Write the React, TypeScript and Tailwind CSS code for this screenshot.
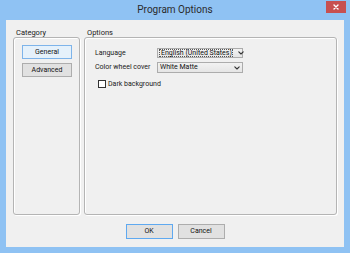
import React from "react";

const font = { fontFamily: 'Roboto, "Liberation Sans", Arial, sans-serif' };

function Chevron() {
  return (
    <svg width="6" height="4" viewBox="0 0 6 4" fill="none" stroke="#333" strokeWidth="1.1" strokeLinecap="round" strokeLinejoin="round">
      <path d="M0.8 0.8 L3 3 L5.2 0.8" />
    </svg>
  );
}

function Combo({ value, focused }: { value: string; focused?: boolean }) {
  return (
    <div className="w-[86px] h-full flex items-center border border-[#acacac] bg-gradient-to-b from-[#f2f2f2] to-[#e5e5e5] pl-[1px]">
      <div className={`flex-1 h-full flex items-center pl-[1px] text-[7px] leading-none text-[#111] whitespace-nowrap ${focused ? "border border-[#555] border-dotted mr-[3px]" : ""}`}>
        {value}
      </div>
      <div className="w-[10px] flex items-center justify-center shrink-0">
        <Chevron />
      </div>
    </div>
  );
}

function GroupBox({ label, className, children }: { label: string; className: string; children?: React.ReactNode }) {
  return (
    <div className={`flex flex-col ${className}`}>
      <div className="h-[9px] pl-[3px] text-[7.5px] leading-[9px] text-[#1a1a1a]">{label}</div>
      <div className="h-[178px] border border-[#b4b4b4] rounded-[3px] shadow-[1px_1px_0_#fff,inset_1px_1px_0_#fff]">
        {children}
      </div>
    </div>
  );
}

export default function App() {
  return (
    <div className="w-[350px] h-[253px] bg-[#8fc2f3] flex flex-col overflow-hidden" style={font}>
      {/* Title bar */}
      <div className="h-[20px] grid grid-cols-[1fr_auto_1fr] shrink-0">
        <div />
        <div className="self-center text-[10px] leading-none text-[#2b2b2b] pb-[1px]">Program Options</div>
        <div className="flex justify-end pr-[4px]">
          <div className="mt-[1px] w-[20px] h-[12px] bg-[#c75050] flex items-center justify-center">
            <svg width="6" height="6" viewBox="0 0 6 6" stroke="#fff" strokeWidth="1.4" strokeLinecap="round">
              <path d="M1 1 L5 5 M5 1 L1 5" />
            </svg>
          </div>
        </div>
      </div>

      {/* Client area */}
      <div className="flex-1 mx-[6px] mb-[6px] bg-[#f0f0f0] flex flex-col px-[7px] pt-[8px]">
        <div className="flex gap-[4px]">
          <GroupBox label="Category" className="w-[67px]">
            <div className="flex flex-col gap-[4px] pt-[7px] pl-[8px]">
              <button className="w-[50px] h-[14px] border border-[#7eb4ea] bg-[#e5f1fb] text-[7px] leading-none text-[#111]">
                General
              </button>
              <button className="w-[50px] h-[14px] border border-[#adadad] bg-[#e1e1e1] text-[7px] leading-none text-[#111]">
                Advanced
              </button>
            </div>
          </GroupBox>

          <GroupBox label="Options" className="flex-1">
            <div className="flex flex-col pt-[10px] pl-[10px]">
              <div className="flex items-center h-[10px]">
                <span className="w-[62px] text-[7px] leading-none text-[#1a1a1a] whitespace-nowrap">Language</span>
                <Combo value="English (United States)" focused />
              </div>
              <div className="flex items-center h-[11px] mt-[4px]">
                <span className="w-[62px] text-[7px] leading-none text-[#1a1a1a] whitespace-nowrap">Color wheel cover</span>
                <Combo value="White Matte" />
              </div>
              <div className="flex items-center mt-[7px] ml-[3px] gap-[2px]">
                <span className="w-[8px] h-[8px] border border-[#333] bg-white" />
                <span className="text-[7px] leading-none text-[#1a1a1a]">Dark background</span>
              </div>
            </div>
          </GroupBox>
        </div>

        <div className="flex justify-center gap-[5px] mt-[9px]">
          <button className="w-[47px] h-[15px] border border-[#5fa9f0] bg-[#e1e1e1] text-[7px] leading-none text-[#111]">
            OK
          </button>
          <button className="w-[47px] h-[15px] border border-[#adadad] bg-[#e1e1e1] text-[7px] leading-none text-[#111]">
            Cancel
          </button>
        </div>
      </div>
    </div>
  );
}
